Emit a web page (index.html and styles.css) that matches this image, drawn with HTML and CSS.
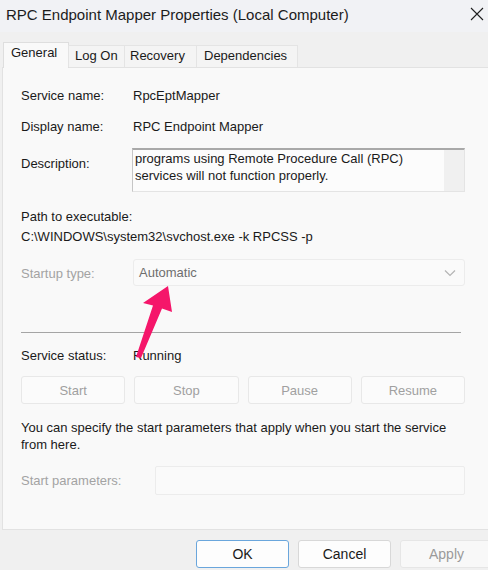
FILE: index.html
```html
<!DOCTYPE html>
<html lang="en">
<head>
<meta charset="utf-8">
<title>RPC Endpoint Mapper Properties (Local Computer)</title>
<link rel="stylesheet" href="styles.css">
</head>
<body>
<div class="dialog">
  <div class="titlebar">
    <span class="title">RPC Endpoint Mapper Properties (Local Computer)</span>
    <svg class="close" width="14" height="14" viewBox="0 0 14 14"><path d="M1 1 L13 13 M13 1 L1 13" stroke="#1f1f1f" stroke-width="1.1" fill="none"/></svg>
  </div>

  <div class="tabs">
    <div class="tab active">General</div>
    <div class="tab">Log On</div>
    <div class="tab">Recovery</div>
    <div class="tab">Dependencies</div>
  </div>

  <div class="panel">
    <div class="row r-name">
      <span class="label">Service name:</span>
      <span class="value">RpcEptMapper</span>
    </div>
    <div class="row r-display">
      <span class="label">Display name:</span>
      <span class="value">RPC Endpoint Mapper</span>
    </div>
    <div class="row r-desc">
      <span class="label desc-label">Description:</span>
      <div class="desc-box">
        <div class="desc-text">programs using Remote Procedure Call (RPC) services will not function properly.</div>
        <div class="scrollbar"></div>
      </div>
    </div>
    <div class="path-label">Path to executable:</div>
    <div class="path-value">C:\WINDOWS\system32\svchost.exe -k RPCSS -p</div>
    <div class="row r-startup">
      <span class="label muted">Startup type:</span>
      <div class="select">
        <span>Automatic</span>
        <svg class="chevron" width="12" height="8" viewBox="0 0 12 8"><path d="M1 1.5 L6 6.5 L11 1.5" stroke="#b4b4b4" stroke-width="1.2" fill="none"/></svg>
      </div>
    </div>
    <div class="separator"></div>
    <div class="row r-status">
      <span class="label">Service status:</span>
      <span class="value">Running</span>
    </div>
    <div class="actions">
      <button class="btn" disabled>Start</button>
      <button class="btn" disabled>Stop</button>
      <button class="btn" disabled>Pause</button>
      <button class="btn" disabled>Resume</button>
    </div>
    <p class="hint">You can specify the start parameters that apply when you start the service from here.</p>
    <div class="row r-params">
      <span class="label muted params-label">Start parameters:</span>
      <div class="input"></div>
    </div>
  </div>

  <div class="footer">
    <button class="fbtn default">OK</button>
    <button class="fbtn">Cancel</button>
    <button class="fbtn disabled">Apply</button>
  </div>

  <svg class="pointer" width="60" height="90" viewBox="0 0 60 90">
    <polygon points="46,5 21,22 31,24.5 14,76 19,77 40,27.5 50,31" fill="#f5166a"/>
  </svg>
</div>
</body>
</html>
```

FILE: styles.css
```css
html, body {
  margin: 0;
  padding: 0;
}

body {
  width: 488px;
  height: 570px;
  overflow: hidden;
  background: #f0f0f0;
  font-family: "Liberation Sans", Arial, sans-serif;
  font-size: 13px;
  color: #1a1a1a;
}

.dialog {
  position: relative;
  width: 488px;
  height: 570px;
}

/* title bar */
.titlebar {
  height: 32px;
  display: flex;
  align-items: center;
  justify-content: space-between;
  padding: 0 4px 0 6px;
  background: #f1f2f5;
}

.title {
  font-size: 15px;
  color: #1c1c1c;
  margin-top: -4px;
}

.close {
  margin-top: -4px;
}

/* tab strip */
.tabs {
  display: flex;
  align-items: flex-end;
  height: 35px;
  padding-left: 3px;
  position: relative;
  z-index: 1;
}

.tab {
  height: 21px;
  line-height: 20px;
  padding: 0 6px;
  background: #f4f4f4;
  border: 1px solid #e4e4e4;
  border-bottom: none;
  margin-right: -1px;
  color: #1a1a1a;
}

.tab:nth-child(2) { width: 43px; }
.tab:nth-child(3) { width: 60px; padding-left: 5px; }
.tab:nth-child(4) { width: 87px; padding-left: 7px; }

.tab.active {
  height: 25px;
  line-height: 19px;
  width: 51px;
  padding: 0 6px 0 7px;
  background: #f9f9f9;
  border-color: #dedede;
  margin-bottom: -1px;
}

/* general page */
.panel {
  margin-left: 2px;
  height: 463px;
  box-sizing: border-box;
  background: #f9f9f9;
  border: 1px solid #e2e2e2;
  border-right: none;
  padding: 17px 0 0 18px;
}

.row {
  display: flex;
  align-items: center;
}

.label {
  width: 112px;
  flex: none;
}

.muted {
  color: #a3a3a3;
}

.r-name,
.r-display,
.r-status {
  height: 20px;
}

.r-display {
  margin-top: 11px;
}

.r-desc {
  margin-top: 12px;
  align-items: flex-start;
}

.desc-label {
  width: 111px;
  padding-top: 8px;
}

.desc-box {
  width: 333px;
  height: 44px;
  box-sizing: border-box;
  display: flex;
  background: #fcfcfc;
  border: 1px solid #e4e4e4;
  border-top: 2px solid #a9a9a9;
  border-left: 1px solid #c6c6c6;
}

.desc-text {
  flex: 1;
  padding: 0 0 0 2px;
  line-height: 17px;
}

.scrollbar {
  width: 20px;
  background: #f0f0f0;
}

.path-label {
  margin-top: 17px;
  line-height: 16px;
}

.path-value {
  margin-top: 4px;
  line-height: 16px;
}

.r-startup {
  margin-top: 14px;
}

.r-startup .label {
  padding-top: 1px;
}

.select {
  width: 332px;
  height: 27px;
  box-sizing: border-box;
  display: flex;
  align-items: center;
  justify-content: space-between;
  padding: 0 8px 0 5px;
  background: #fafafa;
  border: 1px solid #ececec;
  border-radius: 3px;
  color: #6e6e6e;
}

.separator {
  margin-top: 46px;
  width: 440px;
  height: 1px;
  background: #a5a5a5;
}

.r-status {
  margin-top: 12px;
}

.actions {
  margin-top: 11px;
  width: 444px;
  display: grid;
  grid-template-columns: repeat(4, 1fr);
  gap: 9px;
}

.btn {
  height: 28px;
  font: inherit;
  color: #a0a0a0;
  background: #fbfbfb;
  border: 1px solid #e8e8e8;
  border-radius: 3px;
}

.hint {
  margin: 15px 0 0;
  width: 450px;
  line-height: 17px;
}

.r-params {
  margin-top: 13px;
}

.params-label {
  width: 134px;
}

.input {
  width: 310px;
  height: 29px;
  box-sizing: border-box;
  background: #fafafa;
  border: 1px solid #ececec;
  border-radius: 2px;
}

/* dialog buttons */
.footer {
  display: flex;
  padding: 10px 0 0 196px;
  gap: 9px;
}

.fbtn {
  width: 93px;
  height: 28px;
  flex: none;
  font: inherit;
  font-size: 14px;
  color: #1a1a1a;
  background: #fdfdfd;
  border: 1px solid #d8d8d8;
  border-radius: 3px;
}

.fbtn.default {
  border-color: #6aa6dc;
}

.fbtn.disabled {
  color: #9a9a9a;
  background: #f8f8f8;
  border-color: #e6e6e6;
}

/* callout arrow over the startup field */
.pointer {
  position: absolute;
  left: 122px;
  top: 281px;
}
```
